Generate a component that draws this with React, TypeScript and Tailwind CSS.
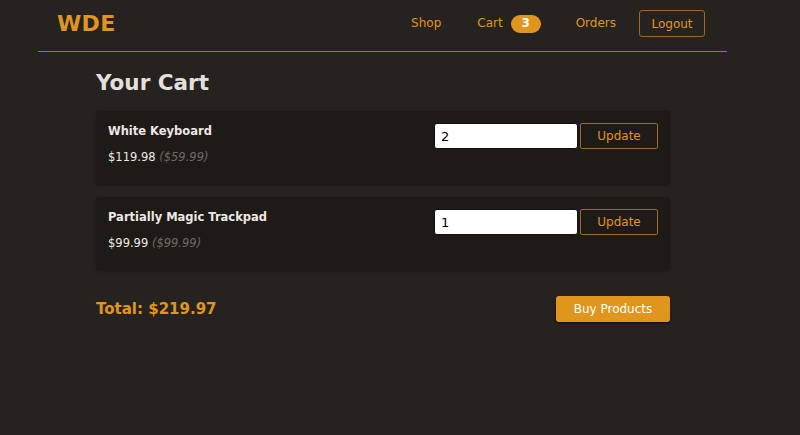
import { useState } from "react";

const ORANGE = "#e0951c";

type Item = { id: number; title: string; total: string; unit: string; qty: number };

const ITEMS: Item[] = [
  { id: 1, title: "White Keyboard", total: "$119.98", unit: "($59.99)", qty: 2 },
  { id: 2, title: "Partially Magic Trackpad", total: "$99.99", unit: "($99.99)", qty: 1 },
];

function CartRow({ item }: { item: Item }) {
  const [qty, setQty] = useState(String(item.qty));
  return (
    <div className="flex justify-between rounded-[3px] bg-[#1e1a17] pl-3 pr-3 pt-3 h-[73px] shadow-[0_1px_3px_rgba(0,0,0,0.35)]">
      <div className="flex flex-col">
        <h3 className="text-[11.5px] font-bold text-[#ece8e4] leading-[16px]">{item.title}</h3>
        <p className="mt-[9px] text-[11.5px] text-[#ece8e4] leading-[18px]">
          {item.total} <span className="italic text-[#6e6864]">{item.unit}</span>
        </p>
      </div>
      <div className="flex items-start gap-[2px]">
        <input
          value={qty}
          onChange={(e) => setQty(e.target.value)}
          className="w-[144px] h-[26px] rounded-[3px] bg-white border border-[#111] px-[6px] text-[13px] text-black outline-none"
        />
        <button className="w-[78px] h-[26px] rounded-[2px] border border-[#9a6a1e] text-[12px] text-[#e0951c]">
          Update
        </button>
      </div>
    </div>
  );
}

export default function App() {
  return (
    <div
      className="min-h-[435px] w-full bg-[#252220]"
      style={{ fontFamily: "'DejaVu Sans', sans-serif" }}
    >
      {/* ── Header ── */}
      <header className="ml-[38px] w-[689px] flex items-center justify-between pl-[19px] pr-[22px] pt-[10px] pb-[14px] border-b border-[#ad7419]">
        <span className="text-[22px] leading-[27px] font-bold tracking-[0.3px] text-[#e0951c]">WDE</span>
        <nav className="flex items-center text-[12px] leading-[27px] text-[#e0951c]">
          <a className="mr-[36px]">Shop</a>
          <a className="flex items-center mr-[35px]">
            Cart
            <span className="ml-[8px] inline-flex items-center justify-center w-[30px] h-[18px] rounded-full bg-[#e0951c] text-[12px] font-bold text-white">
              3
            </span>
          </a>
          <a className="mr-[23px]">Orders</a>
          <button className="h-[27px] w-[66px] rounded-[3px] border border-[#9a6a1e] text-[#e0951c]">Logout</button>
        </nav>
      </header>

      {/* ── Cart ── */}
      <main className="ml-[96px] w-[574px] pt-[16px]">
        <h1 className="text-[21.5px] font-bold text-[#e4e0dc] leading-[30px]">Your Cart</h1>
        <div className="mt-[13px] flex flex-col gap-[13px]">
          {ITEMS.map((it) => (
            <CartRow key={it.id} item={it} />
          ))}
        </div>
        <div className="mt-[26px] flex items-center justify-between">
          <h2 className="text-[15px] font-bold" style={{ color: ORANGE }}>Total: $219.97</h2>
          <button className="w-[114px] h-[26px] rounded-[3px] bg-[#e0951c] text-[12px] text-white shadow-[0_1px_2px_rgba(0,0,0,0.5)]">
            Buy Products
          </button>
        </div>
      </main>
    </div>
  );
}
